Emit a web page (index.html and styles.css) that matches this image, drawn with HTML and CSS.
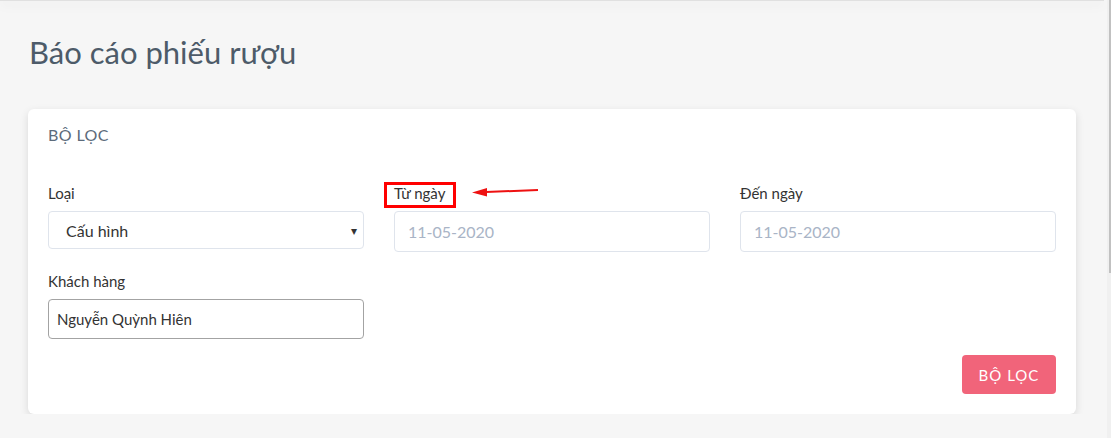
FILE: index.html
```html
<!DOCTYPE html>
<html lang="vi">
<head>
<meta charset="utf-8">
<title>Báo cáo phiếu rượu</title>
<link rel="stylesheet" href="styles.css">
</head>
<body>
<div class="topbar"></div>
<main class="page">
  <h1 class="page-title">Báo cáo phiếu rượu</h1>
  <section class="card">
    <div class="card-header">BỘ LỌC</div>
    <div class="grid">
      <div class="field">
        <label class="label">Loại</label>
        <div class="select">
          <span>Cấu hình</span>
          <span class="caret">&#9662;</span>
        </div>
      </div>
      <div class="field">
        <label class="label label-marked">Từ ngày
          <svg class="arrow" width="70" height="14" viewBox="0 0 70 14"><path d="M16 7 L68 5" stroke="#ee1111" stroke-width="2" fill="none"/><path d="M2 7.5 L17 3 L17 11.5 Z" fill="#ee1111"/></svg>
        </label>
        <div class="input placeholder">11-05-2020</div>
      </div>
      <div class="field">
        <label class="label">Đến ngày</label>
        <div class="input placeholder">11-05-2020</div>
      </div>
      <div class="field">
        <label class="label">Khách hàng</label>
        <div class="input input-dark">Nguyễn Quỳnh Hiên</div>
      </div>
    </div>
    <div class="actions">
      <button class="btn">BỘ LỌC</button>
    </div>
  </section>
</main>
<div class="scrollbar"><div class="thumb"></div></div>
</body>
</html>
```

FILE: styles.css
```css
body {
  margin: 0;
  background: #f6f6f6;
  font-family: Lato, "Noto Sans", sans-serif;
  color: #333;
  overflow: hidden;
}

.topbar {
  height: 1px;
  margin-right: 7px;
  background: #e0e0e0;
  box-shadow: 0 2px 12px rgba(0,0,0,0.22);
}
.page {
  padding: 0 35px 0 28px;
}
.page-title {
  margin: 0;
  padding: 29px 0 0 1px;
  height: 108px;
  box-sizing: border-box;
  font-size: 31px;
  font-weight: 400;
  color: #4d5b69;
  line-height: 44px;
}
.card {
  background: #fff;
  border-radius: 6px;
  box-shadow: 0 3px 8px rgba(0,0,0,0.12);
  padding: 16px 20px 20px;
}
.card-header {
  font-size: 16px;
  letter-spacing: 0.4px;
  color: #5c6b7b;
  line-height: 20px;
  height: 59px;
}
.grid {
  display: grid;
  grid-template-columns: repeat(3, 1fr);
  column-gap: 30px;
  row-gap: 20px;
}
.field { display: flex; flex-direction: column; }
.label {
  position: relative;
  font-size: 15px;
  line-height: 18px;
  color: #333;
  margin-bottom: 9px;
  align-self: flex-start;
}
.label-marked::after {
  content: "";
  position: absolute;
  left: -10px;
  top: -2px;
  width: 72px;
  height: 26px;
  border: 3px solid #ff0000;
  box-sizing: border-box;
}
.arrow {
  position: absolute;
  left: 76px;
  top: 1px;
}
.select {
  height: 38px;
  box-sizing: border-box;
  border: 1px solid #dfe4ec;
  border-radius: 4px;
  display: flex;
  align-items: center;
  justify-content: space-between;
  padding: 0 6px 0 17px;
  font-size: 16px;
  color: #333;
}
.caret { font-size: 12px; color: #333; }
.input {
  height: 41px;
  box-sizing: border-box;
  border: 1px solid #dfe4ec;
  border-radius: 4px;
  display: flex;
  align-items: center;
  padding: 0 13px;
  font-size: 16px;
}
.placeholder { color: #a9b4c6; }
.input-dark {
  height: 40px;
  border-color: #a3a3a3;
  font-size: 15px;
  color: #333;
  padding: 0 8px;
}
.actions {
  display: flex;
  justify-content: flex-end;
  margin-top: 16px;
}
.btn {
  width: 94px;
  height: 39px;
  border: 0;
  border-radius: 4px;
  background: #f1647a;
  color: #fff;
  font-family: Lato, "Noto Sans", sans-serif;
  font-size: 15px;
  letter-spacing: 1px;
}
.scrollbar {
  position: fixed;
  top: 0;
  right: 0;
  width: 4px;
  height: 100%;
  background: #f0f0f0;
}
.thumb {
  margin-left: 2px;
  height: 273px;
  background: #c1c1c1;
}
```
